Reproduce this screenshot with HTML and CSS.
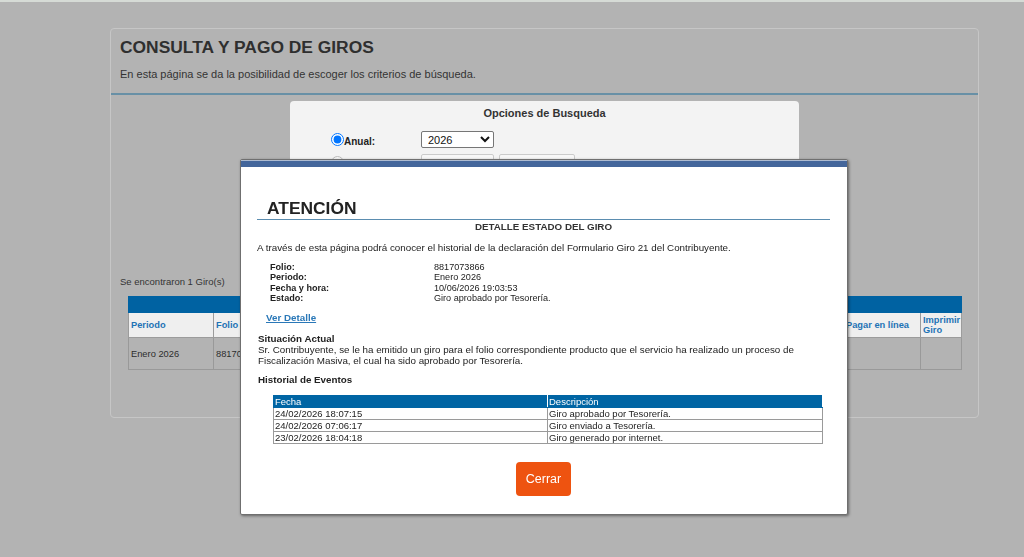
FILE: index.html
```html
<!DOCTYPE html>
<html lang="es">
<head>
<meta charset="utf-8">
<title>Consulta y Pago de Giros</title>
<link rel="stylesheet" href="styles.css">
</head>
<body>
<div class="topline"></div>
<div class="page">
  <div class="card">
    <div class="card-head">
      <h1 class="card-title">CONSULTA Y PAGO DE GIROS</h1>
      <p class="card-sub">En esta página se da la posibilidad de escoger los criterios de búsqueda.</p>
    </div>
    <div class="card-body">
      <div class="search">
        <div class="search-title">Opciones de Busqueda</div>
        <div class="search-row">
          <input class="radio" type="radio" name="tipo" checked>
          <span class="search-label">Anual:</span>
          <select class="sel sel-year"><option>2026</option></select>
        </div>
        <div class="search-row dim">
          <input class="radio" type="radio" name="tipo">
          <span class="search-label">Mensual:</span>
          <select class="sel sel-month" disabled><option>Seleccione</option></select>
          <select class="sel sel-month2" disabled><option>Seleccione</option></select>
        </div>
      </div>
      <p class="found">Se encontraron 1 Giro(s)</p>
      <table class="giros">
        <colgroup>
          <col class="c-per"><col class="c-fol"><col class="c-mid"><col class="c-mid"><col class="c-mid"><col class="c-tot"><col class="c-pag"><col class="c-imp">
        </colgroup>
        <thead>
          <tr class="giros-bar"><th colspan="8"></th></tr>
          <tr class="giros-head">
            <th>Periodo</th><th>Folio</th><th></th><th></th><th></th><th></th><th>Pagar en línea</th><th>Imprimir Giro</th>
          </tr>
        </thead>
        <tbody>
          <tr class="giros-row">
            <td>Enero 2026</td><td>88170</td><td></td><td></td><td></td><td></td><td></td><td></td>
          </tr>
        </tbody>
      </table>
    </div>
  </div>
</div>

<div class="modal">
  <div class="modal-bar"></div>
  <div class="modal-body">
    <h2 class="modal-title">ATENCIÓN</h2>
    <div class="modal-sub">DETALLE ESTADO DEL GIRO</div>
    <p class="modal-intro">A través de esta página podrá conocer el historial de la declaración del Formulario Giro 21 del Contribuyente.</p>
    <div class="fields">
      <span class="f-label">Folio:</span><span class="f-val">8817073866</span>
      <span class="f-label">Periodo:</span><span class="f-val">Enero 2026</span>
      <span class="f-label">Fecha y hora:</span><span class="f-val">10/06/2026 19:03:53</span>
      <span class="f-label">Estado:</span><span class="f-val">Giro aprobado por Tesorería.</span>
    </div>
    <a class="detail-link" href="#">Ver Detalle</a>
    <div class="section-title situ">Situación Actual</div>
    <p class="situ-text">Sr. Contribuyente, se le ha emitido un giro para el folio correspondiente producto que el servicio ha realizado un proceso de Fiscalización Masiva, el cual ha sido aprobado por Tesorería.</p>
    <div class="section-title hist">Historial de Eventos</div>
    <table class="events">
      <thead>
        <tr><th class="ev-date">Fecha</th><th>Descripción</th></tr>
      </thead>
      <tbody>
        <tr><td>24/02/2026 18:07:15</td><td>Giro aprobado por Tesorería.</td></tr>
        <tr><td>24/02/2026 07:06:17</td><td>Giro enviado a Tesorería.</td></tr>
        <tr><td>23/02/2026 18:04:18</td><td>Giro generado por internet.</td></tr>
      </tbody>
    </table>
    <div class="actions">
      <button class="btn-close" type="button">Cerrar</button>
    </div>
  </div>
</div>
</body>
</html>
```

FILE: styles.css
```css
* { box-sizing: border-box; }

html, body {
  margin: 0;
  padding: 0;
  height: 100%;
  overflow: hidden;
}

body {
  background: #b3b3b3;
  font-family: "Liberation Sans", Arial, sans-serif;
  color: #333;
  position: relative;
}

.topline {
  height: 2px;
  background: #d6dbd6;
}

.page {
  padding: 26px 45px 0 110px;
}

.card {
  border: 1px solid #c6c6c6;
  border-radius: 4px;
  height: 390px;
}

.card-head {
  padding: 8px 9px 12px;
  border-bottom: 2px solid #6890a6;
}

.card-title {
  margin: 0;
  font-size: 17.4px;
  line-height: 21px;
  font-weight: bold;
  color: #2f2f2f;
}

.card-sub {
  margin: 9px 0 0;
  font-size: 11px;
  line-height: 14px;
  color: #333;
}

.card-body {
  padding-top: 6px;
}

.search {
  margin-left: 179px;
  width: 509px;
  height: 150px;
  background: #f3f3f3;
  border-radius: 4px;
  padding-top: 5px;
}

.search-title {
  text-align: center;
  font-size: 11px;
  line-height: 14px;
  font-weight: bold;
  color: #333;
}

.search-row {
  display: flex;
  align-items: center;
  padding-left: 41px;
  margin-top: 11px;
  height: 17px;
}

.search-row.dim {
  margin-top: 6px;
  opacity: 0.45;
}

.radio {
  margin: 0;
  width: 13px;
  height: 13px;
}

.search-label {
  width: 77px;
  font-size: 10px;
  font-weight: bold;
  color: #222;
  padding-top: 4px;
}

.sel {
  height: 17px;
  font-family: "Liberation Sans", Arial, sans-serif;
  font-size: 11px;
  border: 1px solid #767676;
  border-radius: 2px;
  background: #fff;
  padding: 0 2px;
  color: #111;
}

.sel-year { width: 73px; }
.sel-month { width: 73px; }
.sel-month2 { width: 76px; margin-left: 5px; }

.found {
  margin: 24px 0 0 9px;
  font-size: 9.5px;
  line-height: 13px;
  color: #333;
}

.giros {
  margin: 8px 0 0 17px;
  width: 833px;
  border-collapse: collapse;
  table-layout: fixed;
  font-size: 9.3px;
}

.c-per { width: 85px; }
.c-fol { width: 90px; }
.c-mid { width: 140px; }
.c-tot { width: 120px; }
.c-pag { width: 77px; }
.c-imp { width: 41px; }

.giros-bar th {
  height: 16px;
  background: #0062a2;
  padding: 0;
  border: 1px solid #0062a2;
}

.giros-head th {
  height: 25px;
  background: #efefef;
  color: #1e73b5;
  font-weight: bold;
  text-align: left;
  padding: 0 2px;
  border: 1px solid #9c9c9c;
  line-height: 10px;
  vertical-align: middle;
}

.giros-row td {
  height: 32px;
  padding: 0 2px;
  border: 1px solid #999;
  color: #2d2d2d;
  white-space: nowrap;
  overflow: hidden;
}

/* Modal */
.modal {
  position: absolute;
  left: 240px;
  top: 159px;
  width: 608px;
  height: 356px;
  background: #fff;
  border: 1px solid #6f6f6f;
  border-radius: 2px;
  box-shadow: 1px 1px 3px rgba(0, 0, 0, 0.45);
}

.modal-bar {
  height: 7px;
  background: #44669b;
  border-top: 1px solid #aebbd0;
}

.modal-body {
  padding: 0 17px 0 16px;
  font-size: 9.8px;
  color: #222;
}

.modal-title {
  margin: 31px 0 0;
  padding-left: 10px;
  font-size: 17.4px;
  line-height: 21px;
  font-weight: bold;
  color: #222;
  border-bottom: 1px solid #5b8db0;
}

.modal-sub {
  margin-top: 0;
  text-align: center;
  font-weight: bold;
  line-height: 13px;
  color: #333;
}

.modal-intro {
  margin: 8px 0 0;
  line-height: 13px;
}

.fields {
  display: grid;
  grid-template-columns: 164px auto;
  margin: 8px 0 0 13px;
  font-size: 9.1px;
  line-height: 10.4px;
}

.f-label {
  font-weight: bold;
  color: #222;
}

.detail-link {
  display: inline-block;
  margin: 7px 0 0 9px;
  line-height: 13px;
  color: #2a78b8;
  font-weight: bold;
  text-decoration: underline;
}

.section-title {
  font-weight: bold;
  line-height: 11px;
  color: #222;
  margin-left: 1px;
}

.situ { margin-top: 9px; }
.hist { margin-top: 7px; }

.situ-text {
  margin: 0 0 0 1px;
  line-height: 11.6px;
}

.events {
  margin: 10px 0 0 16px;
  width: 550px;
  border-collapse: collapse;
  table-layout: fixed;
  border: 1px solid #9a9a9a;
  font-size: 9.5px;
}

.events th, .events td {
  height: 12px;
  line-height: 11px;
  padding: 0 1px;
  text-align: left;
  font-weight: normal;
  border: 1px solid #9a9a9a;
  white-space: nowrap;
}

.events th {
  background: #0065a4;
  color: #fff;
  border-color: #0065a4 #fff #0065a4 #0065a4;
}

.ev-date { width: 274px; }

.events td { color: #222; }

.actions {
  display: flex;
  justify-content: center;
  margin-top: 18px;
}

.btn-close {
  width: 55px;
  height: 34px;
  border: 0;
  border-radius: 4px;
  background: #ee5310;
  color: #fff;
  font-family: "Liberation Sans", Arial, sans-serif;
  font-size: 12.5px;
  padding: 0;
}
```
